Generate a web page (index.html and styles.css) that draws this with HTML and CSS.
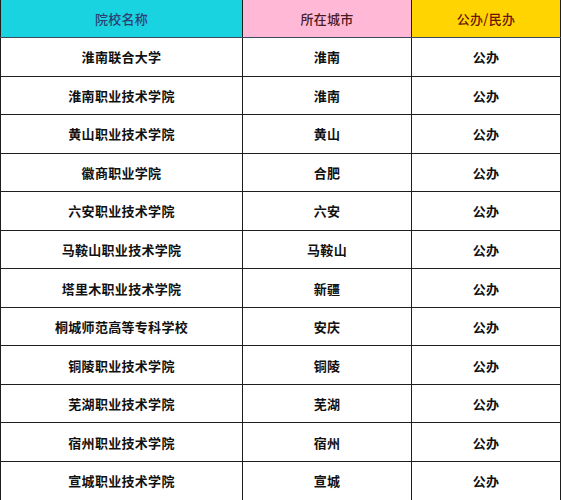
FILE: index.html
```html
<!DOCTYPE html>
<html lang="zh">
<head>
<meta charset="utf-8">
<link rel="stylesheet" href="styles.css">
</head>
<body>
<table class="schools">
  <colgroup>
    <col class="c1"><col class="c2"><col class="c3">
  </colgroup>
  <thead>
    <tr>
      <th class="h-name">院校名称</th>
      <th class="h-city">所在城市</th>
      <th class="h-type">公办/民办</th>
    </tr>
  </thead>
  <tbody>
    <tr><td>淮南联合大学</td><td>淮南</td><td>公办</td></tr>
    <tr><td>淮南职业技术学院</td><td>淮南</td><td>公办</td></tr>
    <tr><td>黄山职业技术学院</td><td>黄山</td><td>公办</td></tr>
    <tr><td>徽商职业学院</td><td>合肥</td><td>公办</td></tr>
    <tr><td>六安职业技术学院</td><td>六安</td><td>公办</td></tr>
    <tr><td>马鞍山职业技术学院</td><td>马鞍山</td><td>公办</td></tr>
    <tr><td>塔里木职业技术学院</td><td>新疆</td><td>公办</td></tr>
    <tr><td>桐城师范高等专科学校</td><td>安庆</td><td>公办</td></tr>
    <tr><td>铜陵职业技术学院</td><td>铜陵</td><td>公办</td></tr>
    <tr><td>芜湖职业技术学院</td><td>芜湖</td><td>公办</td></tr>
    <tr><td>宿州职业技术学院</td><td>宿州</td><td>公办</td></tr>
    <tr><td>宣城职业技术学院</td><td>宣城</td><td>公办</td></tr>
  </tbody>
</table>
</body>
</html>
```
FILE: styles.css
```css
html, body {
  margin: 0;
  padding: 0;
  background: #ffffff;
}
.schools {
  border-collapse: collapse;
  table-layout: fixed;
  width: 560px;
  font-family: "Noto Sans CJK SC", "DejaVu Sans", sans-serif;
  font-size: 13px;
  letter-spacing: 0.3px;
}
.c1 { width: 242px; }
.c2 { width: 169px; }
.c3 { width: 149px; }
.schools th,
.schools td {
  border: 1px solid #1e1e1e;
  text-align: center;
  vertical-align: middle;
  padding: 0;
}
.schools th {
  height: 37px;
  font-weight: 500;
  border-top: none;
  border-bottom-color: #3d4a5e;
}
.schools td {
  height: 37.55px;
  font-weight: 700;
  color: #111;
}
.h-name { background: #1ad3e0; color: #2d3f72; }
.h-city { background: #ffb8d6; color: #4a1a24; }
.h-type { background: #ffd400; color: #6a1508; }
```
